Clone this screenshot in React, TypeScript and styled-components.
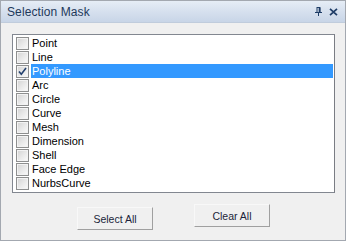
import React, { useState } from "react";
import styled, { createGlobalStyle } from "styled-components";

const GlobalStyle = createGlobalStyle`
  html, body { margin: 0; padding: 0; background: #f0f0f0; }
  body { font-family: "Liberation Sans", Arial, sans-serif; }
  * { box-sizing: border-box; }
`;

const Window = styled.div`
  width: 346px;
  height: 241px;
  border: 1px solid #a3a8b0;
  background: #f0f0f0;
  display: flex;
  flex-direction: column;
`;

const TitleBar = styled.div`
  height: 22px;
  flex: none;
  display: flex;
  align-items: center;
  padding: 0 7px 0 6px;
  background: linear-gradient(to bottom, #e6edf6 0%, #d6e0ee 50%, #c8d5e7 100%);
  border-bottom: 1px solid #c0ccdc;
`;

const Title = styled.span`
  flex: 1;
  font-size: 12px;
  color: #1e395b;
  letter-spacing: 0.1px;
`;

const TitleIcons = styled.div`
  display: flex;
  align-items: center;
  gap: 7px;
`;

const Body = styled.div`
  flex: 1;
  padding: 11px 10px 0 11px;
  display: flex;
  flex-direction: column;
`;

const List = styled.div`
  border: 1px solid #828790;
  border-right-color: #7a7d84;
  background: #ffffff;
  padding: 1px 1px 2px 3px;
  display: flex;
  flex-direction: column;
`;

const Row = styled.div`
  height: 14px;
  display: flex;
  align-items: center;
  cursor: default;
`;

const Box = styled.span<{ $checked: boolean }>`
  width: 13px;
  height: 13px;
  flex: none;
  border: 1px solid #8e8f8f;
  background: linear-gradient(135deg, #d2d2d2 0%, #e8e8e8 50%, #fbfbfb 100%);
  box-shadow: inset 0 0 0 1px #f3f3f3;
  display: flex;
  align-items: center;
  justify-content: center;
`;

const Label = styled.span<{ $selected: boolean }>`
  flex: 1;
  margin-left: 2px;
  height: 14px;
  line-height: 14px;
  padding-left: 1px;
  font-size: 11px;
  color: ${(p) => (p.$selected ? "#ffffff" : "#000000")};
  background: ${(p) => (p.$selected ? "#3399ff" : "transparent")};
  white-space: nowrap;
`;

const ButtonRow = styled.div`
  margin-top: 11px;
  display: flex;
  justify-content: center;
  align-items: flex-start;
  gap: 41px;
`;

const Button = styled.button<{ $drop: number }>`
  width: 76px;
  height: 23px;
  margin-top: ${(p) => p.$drop}px;
  background: #f0f0f0;
  border: 1px solid;
  border-color: #f8f8f8 #a0a0a0 #a0a0a0 #f8f8f8;
  font-family: "Liberation Sans", Arial, sans-serif;
  font-size: 10.5px;
  color: #1b1f3a;
  padding: 0;
  cursor: default;
`;

const items = [
  "Point",
  "Line",
  "Polyline",
  "Arc",
  "Circle",
  "Curve",
  "Mesh",
  "Dimension",
  "Shell",
  "Face Edge",
  "NurbsCurve",
];

const PinIcon = () => (
  <svg width="7" height="9" viewBox="0 0 7 9">
    <path d="M2 0.5 H5 V5" fill="none" stroke="#1e3c66" strokeWidth="1" />
    <path d="M4.5 0 V5.5" stroke="#1e3c66" strokeWidth="1.6" />
    <path d="M0 5.5 H7" stroke="#1e3c66" strokeWidth="1" />
    <path d="M2 0 V5" stroke="#1e3c66" strokeWidth="1" />
    <path d="M3.5 5.5 V9" stroke="#1e3c66" strokeWidth="1" />
  </svg>
);

const CloseIcon = () => (
  <svg width="9" height="8" viewBox="0 0 9 8">
    <path d="M1 0.8 L8 7.2 M8 0.8 L1 7.2" stroke="#1e3c66" strokeWidth="1.7" />
  </svg>
);

const Check = () => (
  <svg width="9" height="9" viewBox="0 0 9 9">
    <path d="M1 4.5 L3.3 7.3 L8 1" fill="none" stroke="#23406e" strokeWidth="1.6" />
  </svg>
);

export default function App() {
  const [checked, setChecked] = useState<Record<string, boolean>>({ Polyline: true });
  const [selected, setSelected] = useState("Polyline");

  return (
    <>
      <GlobalStyle />
      <Window>
        <TitleBar>
          <Title>Selection Mask</Title>
          <TitleIcons>
            <PinIcon />
            <CloseIcon />
          </TitleIcons>
        </TitleBar>
        <Body>
          <List>
            {items.map((name) => (
              <Row key={name} onClick={() => setSelected(name)}>
                <Box
                  $checked={!!checked[name]}
                  onClick={() => setChecked((c) => ({ ...c, [name]: !c[name] }))}
                >
                  {checked[name] && <Check />}
                </Box>
                <Label $selected={selected === name}>{name}</Label>
              </Row>
            ))}
          </List>
          <ButtonRow>
            <Button $drop={3} onClick={() => setChecked(Object.fromEntries(items.map((i) => [i, true])))}>
              Select All
            </Button>
            <Button $drop={0} onClick={() => setChecked({})}>
              Clear All
            </Button>
          </ButtonRow>
        </Body>
      </Window>
    </>
  );
}
